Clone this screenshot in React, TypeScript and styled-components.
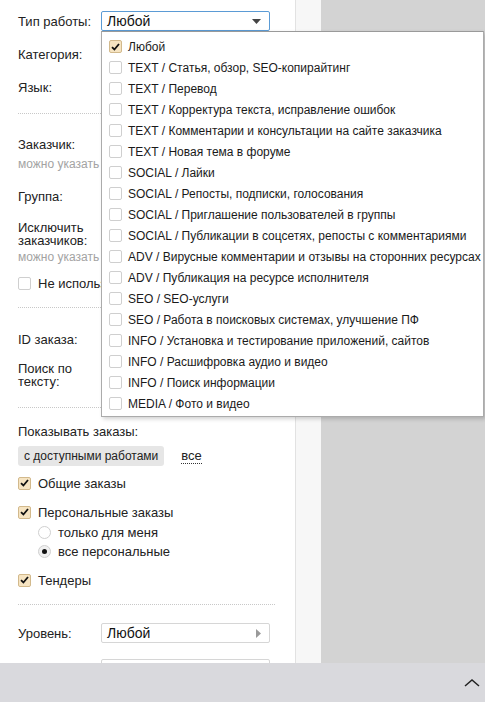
import React from "react";
import styled, { createGlobalStyle } from "styled-components";

const GlobalStyle = createGlobalStyle`
  html, body {
    margin: 0;
    padding: 0;
    height: 100%;
    overflow: hidden;
    background: #d3d3d3;
  }
  body {
    font-family: "Liberation Sans", Arial, sans-serif;
    font-size: 13px;
    color: #222;
  }
`;

const Page = styled.div`
  display: flex;
  height: 702px;
  position: relative;
`;

const Sidebar = styled.div`
  width: 296px;
  flex-shrink: 0;
  background: #fff;
  border-right: 1px solid #e2e2e2;
  padding: 0 20px 0 18px;
  box-sizing: border-box;
`;

const Gutter = styled.div`
  width: 25px;
  flex-shrink: 0;
  background: #f7f7f7;
`;

const Row = styled.div<{ $mt: number; $h?: number }>`
  display: grid;
  grid-template-columns: 83px 169px;
  align-items: center;
  margin-top: ${(p) => p.$mt}px;
  height: ${(p) => p.$h ?? 20}px;
`;

const Label = styled.div`
  line-height: 13px;
`;

const Box = styled.div<{ $focus?: boolean }>`
  height: 20px;
  box-sizing: border-box;
  border: 1px solid ${(p) => (p.$focus ? "#5b9bd5" : "#d6d6d6")};
  border-radius: 2px;
  display: flex;
  align-items: center;
  justify-content: space-between;
  padding: 0 8px 0 5px;
  font-size: 14px;
  color: #111;
  background: #fff;
`;

/* the dropdown list lies over everything right of x=101, so these are clipped there */
const Hint = styled.div<{ $mt: number }>`
  margin-top: ${(p) => p.$mt}px;
  width: 83px;
  overflow: hidden;
  font-size: 12px;
  line-height: 14px;
  color: #a3a3a3;
  white-space: nowrap;
`;

const Separator = styled.div<{ $mt: number }>`
  margin-top: ${(p) => p.$mt}px;
  border-top: 1px dotted #c8c8c8;
`;

const Check = styled.span<{ $on?: boolean }>`
  width: 13px;
  height: 13px;
  box-sizing: border-box;
  border: 1px solid ${(p) => (p.$on ? "#d2b98c" : "#cfcfcf")};
  border-radius: 2px;
  background: ${(p) => (p.$on ? "#f6e4c2" : "#fff")};
  display: inline-flex;
  align-items: center;
  justify-content: center;
  flex-shrink: 0;
`;

const Radio = styled.span<{ $on?: boolean }>`
  width: 13px;
  height: 13px;
  box-sizing: border-box;
  border: 1px solid #d0d0d0;
  border-radius: 50%;
  background: ${(p) => (p.$on ? "#f0f0f0" : "#fff")};
  display: inline-flex;
  align-items: center;
  justify-content: center;
  flex-shrink: 0;
  &::after {
    content: "";
    display: ${(p) => (p.$on ? "block" : "none")};
    width: 5px;
    height: 5px;
    border-radius: 50%;
    background: #111;
  }
`;

const Option = styled.div<{ $mt: number; $indent?: number; $clip?: number }>`
  display: flex;
  align-items: center;
  gap: 7px;
  height: 20px;
  margin-top: ${(p) => p.$mt}px;
  padding-left: ${(p) => p.$indent ?? 0}px;
  width: ${(p) => (p.$clip ? `${p.$clip}px` : "auto")};
  white-space: nowrap;
  overflow: hidden;
`;

const Caption = styled.div<{ $mt: number }>`
  margin-top: ${(p) => p.$mt}px;
  height: 14px;
  line-height: 14px;
`;

const FilterRow = styled.div<{ $mt: number }>`
  display: flex;
  align-items: center;
  gap: 17px;
  margin-top: ${(p) => p.$mt}px;
  height: 20px;
`;

const Pill = styled.span`
  background: #e6e6e6;
  border-radius: 3px;
  height: 20px;
  line-height: 20px;
  padding: 0 6px;
  font-size: 12px;
  white-space: nowrap;
`;

const DottedLink = styled.span`
  border-bottom: 1px dotted #333;
  line-height: 14px;
`;

const Dropdown = styled.div`
  position: absolute;
  left: 101px;
  top: 31px;
  width: 383px;
  box-sizing: border-box;
  background: #fff;
  border: 1px solid #ababab;
  border-top-color: #9a9a9a;
  box-shadow: 2px 2px 4px rgba(0, 0, 0, 0.18);
  padding: 4px 0 2px 7px;
  z-index: 5;
`;

const Item = styled.div`
  display: flex;
  align-items: center;
  gap: 6px;
  height: 21px;
  font-size: 12px;
  white-space: nowrap;
  color: #1a1a1a;
`;

const BottomBar = styled.div`
  position: absolute;
  left: 0;
  right: 0;
  bottom: 0;
  height: 39px;
  background: #d9d9dd;
  display: flex;
  align-items: center;
  justify-content: flex-end;
  padding-right: 4px;
  z-index: 10;
`;

const Tick = () => (
  <svg width="9" height="8" viewBox="0 0 9 8">
    <path d="M1 4.2 L3.4 6.5 L8 1" fill="none" stroke="#111" strokeWidth="1.8" />
  </svg>
);

const Arrow = ({ dir }: { dir: "down" | "right" }) =>
  dir === "down" ? (
    <svg width="9" height="5" viewBox="0 0 9 5">
      <path d="M0 0 H9 L4.5 5 Z" fill="#444" />
    </svg>
  ) : (
    <svg width="5" height="9" viewBox="0 0 5 9">
      <path d="M0 0 L5 4.5 L0 9 Z" fill="#9a9a9a" />
    </svg>
  );

const workTypes = [
  "Любой",
  "TEXT / Статья, обзор, SEO-копирайтинг",
  "TEXT / Перевод",
  "TEXT / Корректура текста, исправление ошибок",
  "TEXT / Комментарии и консультации на сайте заказчика",
  "TEXT / Новая тема в форуме",
  "SOCIAL / Лайки",
  "SOCIAL / Репосты, подписки, голосования",
  "SOCIAL / Приглашение пользователей в группы",
  "SOCIAL / Публикации в соцсетях, репосты с комментариями",
  "ADV / Вирусные комментарии и отзывы на сторонних ресурсах",
  "ADV / Публикация на ресурсе исполнителя",
  "SEO / SEO-услуги",
  "SEO / Работа в поисковых системах, улучшение ПФ",
  "INFO / Установка и тестирование приложений, сайтов",
  "INFO / Расшифровка аудио и видео",
  "INFO / Поиск информации",
  "MEDIA / Фото и видео",
];

export default function App() {
  return (
    <>
      <GlobalStyle />
      <Page>
        <Sidebar>
          <Row $mt={11}>
            <Label>Тип работы:</Label>
            <Box $focus>
              Любой <Arrow dir="down" />
            </Box>
          </Row>
          <Row $mt={13}>
            <Label>Категория:</Label>
            <Box />
          </Row>
          <Row $mt={13}>
            <Label>Язык:</Label>
            <Box />
          </Row>
          <Separator $mt={16} />
          <Row $mt={20}>
            <Label>Заказчик:</Label>
            <Box />
          </Row>
          <Hint $mt={3}>можно указать несколько</Hint>
          <Row $mt={15}>
            <Label>Группа:</Label>
            <Box />
          </Row>
          <Row $mt={14} $h={27}>
            <Label>
              Исключить
              <br />
              заказчиков:
            </Label>
            <Box />
          </Row>
          <Hint $mt={3}>можно указать несколько</Hint>
          <Option $mt={9} $clip={83}>
            <Check />
            Не использовать
          </Option>
          <Separator $mt={14} />
          <Row $mt={21}>
            <Label>ID заказа:</Label>
            <Box />
          </Row>
          <Row $mt={13} $h={26}>
            <Label>
              Поиск по
              <br />
              тексту:
            </Label>
            <Box />
          </Row>
          <Separator $mt={19} />
          <Caption $mt={17}>Показывать заказы:</Caption>
          <FilterRow $mt={7}>
            <Pill>с доступными работами</Pill>
            <DottedLink>все</DottedLink>
          </FilterRow>
          <Option $mt={7}>
            <Check $on>
              <Tick />
            </Check>
            Общие заказы
          </Option>
          <Option $mt={9}>
            <Check $on>
              <Tick />
            </Check>
            Персональные заказы
          </Option>
          <Option $mt={0} $indent={20}>
            <Radio />
            только для меня
          </Option>
          <Option $mt={-1} $indent={20}>
            <Radio $on />
            все персональные
          </Option>
          <Option $mt={9}>
            <Check $on>
              <Tick />
            </Check>
            Тендеры
          </Option>
          <Separator $mt={14} />
          <Row $mt={18}>
            <Label>Уровень:</Label>
            <Box>
              Любой <Arrow dir="right" />
            </Box>
          </Row>
          <Row $mt={16}>
            <Label />
            <Box />
          </Row>
        </Sidebar>
        <Gutter />
        <Dropdown>
          {workTypes.map((t, i) => (
            <Item key={t}>
              <Check $on={i === 0}>{i === 0 && <Tick />}</Check>
              {t}
            </Item>
          ))}
        </Dropdown>
        <BottomBar>
          <svg width="18" height="10" viewBox="0 0 18 10">
            <path d="M2 8 L9 2 L16 8" fill="none" stroke="#222" strokeWidth="1.5" />
          </svg>
        </BottomBar>
      </Page>
    </>
  );
}
